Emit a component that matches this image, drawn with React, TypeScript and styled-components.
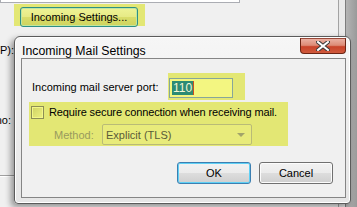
import React from "react"
import styled, { createGlobalStyle } from "styled-components"

const GlobalStyle = createGlobalStyle`
  html, body {
    margin: 0;
    padding: 0;
  }
  body {
    width: 357px;
    height: 207px;
    overflow: hidden;
    background: #f0f0f0;
    font-family: "Segoe UI", "Liberation Sans", Arial, sans-serif;
    font-size: 11px;
    color: #000;
  }
`

const HIGHLIGHT = "#e3e774"
const HIGHLIGHT_LIGHT = "#f3f681"

const Desktop = styled.div`
  position: relative;
  width: 357px;
  height: 207px;
  overflow: hidden;
  display: flex;
`

const ParentWindow = styled.div`
  width: 338px;
  border-right: 1px solid #a3a3a3;
  background: #f0f0f0;
  display: flex;
  flex-direction: column;
`

const ParentFrame = styled.div`
  width: 6px;
  background: #e9e9e9;
  border-right: 1px solid #7c7c7c;
`

const Outside = styled.div`
  flex: 1;
  background: linear-gradient(90deg, #b4b4b4, #9a9a9a);
`

const TopField = styled.div`
  width: 238px;
  height: 2px;
  background: #fff;
  border: 1px solid #abadb3;
  border-top: none;
`

const SettingsHighlight = styled.div`
  margin: 1px 0 0 14px;
  width: 131px;
  height: 22px;
  box-sizing: border-box;
  padding: 3px 0 0 6px;
  background: ${HIGHLIGHT};
`

const SettingsButton = styled.button`
  width: 118px;
  height: 20px;
  box-sizing: border-box;
  padding: 0;
  font: inherit;
  font-size: 11px;
  color: #000;
  border: 1px solid #2f8f86;
  border-radius: 3px;
  background: linear-gradient(#eef396 0%, #e6ea85 50%, #d9dd6a 51%, #cfd35e 100%);
  box-shadow: inset 0 0 0 1px #bfe6a0;
`

const SideLabel = styled.div<{ $top: number; $width: number }>`
  width: ${p => p.$width}px;
  height: 15px;
  line-height: 15px;
  margin-top: ${p => p.$top}px;
  overflow: hidden;
  display: flex;
  justify-content: flex-end;
  white-space: nowrap;
`

const SideDivider = styled.div`
  width: 14px;
  margin-top: 47px;
  border-top: 1px solid #a0a0a0;
  border-bottom: 1px solid #fff;
`

const Dialog = styled.div`
  position: absolute;
  left: 14px;
  top: 36px;
  width: 337px;
  height: 168px;
  box-sizing: border-box;
  border: 1px solid #5b5b5b;
  border-radius: 6px 6px 4px 4px;
  background: linear-gradient(#f6f6f6, #e6e6e6);
  box-shadow: -3px 3px 6px rgba(0, 0, 0, 0.4), inset 0 0 0 1px #fff;
  padding: 0 4px 5px 6px;
  display: flex;
  flex-direction: column;
`

const TitleBar = styled.div`
  height: 21px;
  display: flex;
  align-items: flex-start;
`

const Title = styled.div`
  flex: 1;
  padding: 7px 0 0 1px;
  font-size: 12.3px;
  line-height: 14px;
  color: #000;
  white-space: nowrap;
`

const CloseButton = styled.div`
  width: 46px;
  height: 16px;
  margin: 1px 0 0 0;
  box-sizing: border-box;
  border: 1px solid #6b2414;
  border-top-color: #9a4a3a;
  border-radius: 0 0 4px 4px;
  background: linear-gradient(#eab0a2 0%, #dd8b76 45%, #c9432a 55%, #cf5a3c 100%);
  display: flex;
  align-items: center;
  justify-content: center;
`

const Client = styled.div`
  flex: 1;
  border: 1px solid #858585;
  background: #f0f0f0;
  display: flex;
  flex-direction: column;
`

const PortRow = styled.div`
  margin-top: 14px;
  height: 27px;
  display: flex;
  align-items: center;
  padding-left: 10px;
`

const PortLabel = styled.div`
  width: 136px;
  white-space: nowrap;
`

const PortHighlight = styled.div`
  width: 77px;
  height: 27px;
  box-sizing: border-box;
  padding: 5px 0 0 1px;
  background: ${HIGHLIGHT};
`

const PortInput = styled.div`
  width: 64px;
  height: 20px;
  box-sizing: border-box;
  border: 1px solid #87a69a;
  background: ${HIGHLIGHT_LIGHT};
  display: flex;
  align-items: center;
  padding-left: 2px;
`

const Selected = styled.span`
  background: #2c8b74;
  color: #f4f7d6;
  font-size: 12px;
  line-height: 14px;
  padding: 0 1px 0 1px;
`

const Caret = styled.span`
  width: 1px;
  height: 14px;
  background: #d0501e;
`

const SecureHighlight = styled.div`
  margin: 2px 0 0 7px;
  width: 259px;
  height: 44px;
  background: ${HIGHLIGHT};
  display: flex;
  flex-direction: column;
`

const CheckRow = styled.div`
  height: 17px;
  padding: 4px 0 0 2px;
  display: flex;
  align-items: flex-start;
  gap: 5px;
`

const CheckBox = styled.div`
  flex-shrink: 0;
  width: 13px;
  height: 13px;
  box-sizing: border-box;
  border: 1px solid #8d8e55;
  background: linear-gradient(135deg, #cfd263, #eef180);
  box-shadow: inset 0 0 0 1px #f3f68a;
`

const CheckText = styled.div`
  line-height: 13px;
  letter-spacing: -0.12px;
  white-space: nowrap;
`

const MethodRow = styled.div`
  margin-top: 1px;
  height: 21px;
  display: flex;
  align-items: center;
`

const MethodLabel = styled.div`
  width: 73px;
  flex-shrink: 0;
  box-sizing: border-box;
  padding-left: 25px;
  color: #999a5e;
`

const Combo = styled.div`
  width: 150px;
  height: 21px;
  box-sizing: border-box;
  border: 1px solid #b9bb77;
  border-radius: 2px;
  background: #e8eb7b;
  display: flex;
  align-items: center;
  padding: 0 6px 0 3px;
  color: #5a5b38;
`

const ComboText = styled.div`
  flex: 1;
`

const ComboArrow = styled.div`
  width: 0;
  height: 0;
  border-left: 4px solid transparent;
  border-right: 4px solid transparent;
  border-top: 4px solid #a2a46a;
`

const ButtonRow = styled.div`
  margin-top: auto;
  display: flex;
  justify-content: flex-end;
  gap: 8px;
  padding: 0 12px 13px 0;
`

const DialogButton = styled.button<{ $default?: boolean }>`
  width: 74px;
  height: 22px;
  box-sizing: border-box;
  padding: 0;
  font: inherit;
  font-size: 11px;
  color: #000;
  border: 1px solid ${p => (p.$default ? "#3c7fb1" : "#707070")};
  border-radius: 3px;
  background: linear-gradient(#f2f2f2 0%, #ebebeb 50%, #dddddd 51%, #cfcfcf 100%);
  box-shadow: inset 0 0 0 1px ${p => (p.$default ? "#5fd0f5" : "#fcfcfc")};
`

const CloseGlyph = () => (
  <svg width="14" height="10" viewBox="0 0 14 10">
    <path
      d="M2 1 L12 9 M12 1 L2 9"
      stroke="#3a3a3a"
      strokeWidth="4"
      strokeLinecap="square"
    />
    <path
      d="M2 1 L12 9 M12 1 L2 9"
      stroke="#fff"
      strokeWidth="2"
      strokeLinecap="square"
    />
  </svg>
)

export default function App() {
  return (
    <Desktop>
      <GlobalStyle />
      <ParentWindow>
        <TopField />
        <SettingsHighlight>
          <SettingsButton>Incoming Settings...</SettingsButton>
        </SettingsHighlight>
        <SideLabel $top={17} $width={14}>(SMTP):</SideLabel>
        <SideLabel $top={55} $width={11}>Port no:</SideLabel>
        <SideDivider />
      </ParentWindow>
      <ParentFrame />
      <Outside />

      <Dialog>
        <TitleBar>
          <Title>Incoming Mail Settings</Title>
          <CloseButton>
            <CloseGlyph />
          </CloseButton>
        </TitleBar>
        <Client>
          <PortRow>
            <PortLabel>Incoming mail server port:</PortLabel>
            <PortHighlight>
              <PortInput>
                <Selected>110</Selected>
                <Caret />
              </PortInput>
            </PortHighlight>
          </PortRow>
          <SecureHighlight>
            <CheckRow>
              <CheckBox />
              <CheckText>Require secure connection when receiving mail.</CheckText>
            </CheckRow>
            <MethodRow>
              <MethodLabel>Method:</MethodLabel>
              <Combo>
                <ComboText>Explicit (TLS)</ComboText>
                <ComboArrow />
              </Combo>
            </MethodRow>
          </SecureHighlight>
          <ButtonRow>
            <DialogButton $default>OK</DialogButton>
            <DialogButton>Cancel</DialogButton>
          </ButtonRow>
        </Client>
      </Dialog>
    </Desktop>
  )
}
